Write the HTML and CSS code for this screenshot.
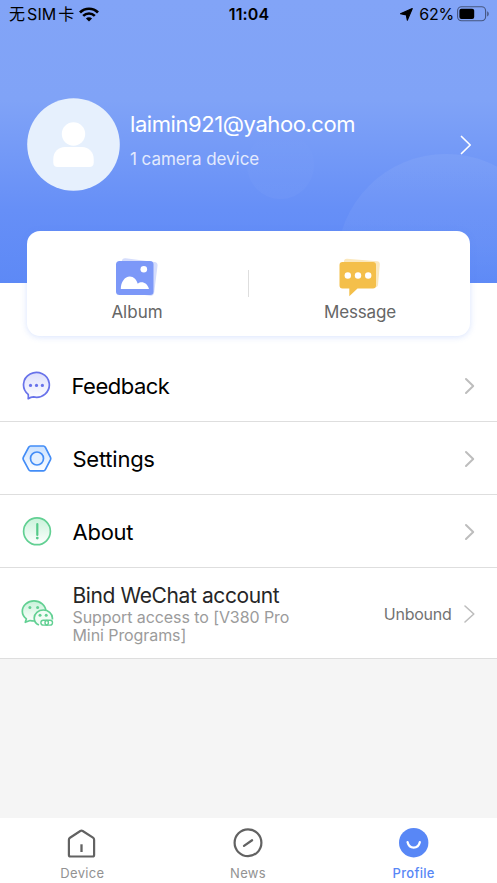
FILE: index.html
```html
<!DOCTYPE html>
<html lang="en">
<head>
<meta charset="utf-8">
<meta name="viewport" content="width=device-width, initial-scale=1">
<title>Profile</title>
<link rel="stylesheet" href="styles.css">
</head>
<body>
<div class="app">
  <header class="hero">
    <i class="bubble bubble-small"></i>
    <i class="bubble bubble-large"></i>
    <div class="status">
      <div class="status-left">
        <span class="carrier">无<span class="sim">SIM</span>卡</span>
        <svg class="wifi" width="20" height="15" viewBox="0 0 20 15"><path d="M1 5.5a12.7 12.7 0 0 1 18 0" fill="none" stroke="#000" stroke-width="2.7"/><path d="M4.2 8.9a8.2 8.2 0 0 1 11.6 0" fill="none" stroke="#000" stroke-width="2.6"/><path d="M10 14.5 6.9 11.5a4.4 4.4 0 0 1 6.2 0z"/></svg>
      </div>
      <time class="clock">11:04</time>
      <div class="status-right">
        <svg class="locate" width="13" height="13" viewBox="0 0 13 13"><path d="M12.3.6 7.3 12.2 6.300 6.900.5 5.8z" stroke="#000" stroke-width="1.100" stroke-linejoin="round"/></svg>
        <span class="percent">62%</span>
        <svg class="battery" width="33" height="16" viewBox="0 0 33 16"><rect x=".6" y=".8" width="28" height="14" rx="4" fill="none" stroke="#45557f" stroke-width="1.1"/><rect x="2.4" y="2.7" width="14.8" height="10.2" rx="2"/><path d="M30.2 5.2c2 .7 2 4.5 0 5.2z" fill="#45557f"/></svg>
      </div>
    </div>
    <div class="account">
      <svg class="avatar" width="93" height="93" viewBox="0 0 93 93"><circle cx="46.5" cy="46.5" r="46.3" fill="#e6f0fd"/><circle cx="46.5" cy="36" r="11.7" fill="#fff"/><path d="M38 49h17c7 0 11.700 5 11.700 12v3.500q0 4.500-4.500 4.500h-31.400q-4.500 0-4.500-4.500v-3.500c0-7 4.700-12 11.700-12z" fill="#fff"/></svg>
      <div class="identity">
        <div class="email">laimin921@yahoo.com</div>
        <div class="devices">1 camera device</div>
      </div>
      <svg class="go" width="12" height="20" viewBox="0 0 12 20"><path d="M1.500 1.500 10.200 10l-8.700 8.500" fill="none" stroke="#fff" stroke-width="1.700" stroke-linecap="round" stroke-linejoin="round"/></svg>
    </div>
  </header>

  <section class="shortcuts">
    <div class="shortcut">
      <svg width="44" height="40" viewBox="0 0 44 40"><rect x="5" y="2" width="36" height="34" rx="3.500" fill="#d5ddfc" transform="rotate(7 23 19)"/><rect x="1" y="3" width="37.500" height="34" rx="3.500" fill="#7c98f8"/><circle cx="28.800" cy="11.300" r="3.300" fill="#fff"/><path d="M5.800 31c0-7 4-12.500 9-12.500 4 0 6.500 3 8 7.200 3.500-2.800 9.200-1.500 11.200 5.300z" fill="#fff"/></svg>
      <span class="album-label">Album</span>
    </div>
    <i class="split"></i>
    <div class="shortcut">
      <svg class="message-icon" width="44" height="40" viewBox="0 0 44 40"><rect x="5" y="2" width="36" height="26" rx="3" fill="#fbe8bd" transform="rotate(5 23 15)"/><path d="M4.500 4h30.500q3 0 3 3v20.500q0 3-3 3h-15.500l-8.200 7.700v-7.700h-6.800q-3 0-3-3v-20.500q0-3 3-3z" fill="#f4bf4a"/><circle cx="9.800" cy="17.500" r="3.200" fill="#fff"/><circle cx="20" cy="17.500" r="3.200" fill="#fff"/><circle cx="30.200" cy="17.500" r="3.200" fill="#fff"/></svg>
      <span class="message-label">Message</span>
    </div>
  </section>

  <main class="menu">
    <div class="row row-first">
      <svg class="icon" width="32" height="32" viewBox="0 0 32 32"><defs><linearGradient id="violet" x2="0" y2="1"><stop stop-color="#dddffc"/><stop offset="1" stop-color="#fff"/></linearGradient></defs><path d="M7.200 24.400A12.900 12.400 0 1 1 12.400 26.900Q9.800 26.900 7.200 28.700 7.500 26.500 7.200 24.400z" fill="url(#violet)" stroke="#6872ea" stroke-width="1.700" stroke-linejoin="round"/><g fill="#6872ea"><circle cx="9.500" cy="15.400" r="1.600"/><circle cx="15.500" cy="15.400" r="1.600"/><circle cx="21.400" cy="15.400" r="1.600"/></g></svg>
      <span class="title feedback">Feedback</span>
      <svg class="next" width="12" height="18" viewBox="0 0 12 18"><path d="M2 2l7.200 7L2 16" fill="none" stroke="#bdbdbd" stroke-width="2" stroke-linecap="round" stroke-linejoin="round"/></svg>
    </div>
    <div class="row">
      <svg class="icon" width="32" height="32" viewBox="0 0 32 32"><defs><linearGradient id="blue" x2="0" y2="1"><stop stop-color="#cae1fe"/><stop offset="1" stop-color="#fff"/></linearGradient></defs><path d="M9.600 3H22.400Q23.600 3 24.300 4.200L29.500 14.300Q30 15.500 29.500 16.700L24.300 26.600Q23.600 27.900 22.400 27.900H9.600Q8.400 27.900 7.700 26.600L2.300 16.700Q1.800 15.500 2.300 14.300L7.700 4.200Q8.400 3 9.600 3z" fill="url(#blue)" stroke="#438df7" stroke-width="1.700"/><circle cx="16" cy="15.500" r="6.500" fill="#e4f0ff" stroke="#438df7" stroke-width="1.700"/></svg>
      <span class="title settings">Settings</span>
      <svg class="next" width="12" height="18" viewBox="0 0 12 18"><path d="M2 2l7.200 7L2 16" fill="none" stroke="#bdbdbd" stroke-width="2" stroke-linecap="round" stroke-linejoin="round"/></svg>
    </div>
    <div class="row">
      <svg class="icon" width="32" height="32" viewBox="0 0 32 32"><defs><linearGradient id="green" x2="0" y2="1"><stop stop-color="#c9f2da"/><stop offset="1" stop-color="#fff"/></linearGradient></defs><circle cx="16" cy="15.300" r="13.400" fill="url(#green)" stroke="#62d093" stroke-width="1.700"/><path d="M16.300 8v11" stroke="#55ca89" stroke-width="2.200" stroke-linecap="round"/><circle cx="16.300" cy="22.100" r="1.400" fill="#55ca89"/></svg>
      <span class="title about">About</span>
      <svg class="next" width="12" height="18" viewBox="0 0 12 18"><path d="M2 2l7.200 7L2 16" fill="none" stroke="#bdbdbd" stroke-width="2" stroke-linecap="round" stroke-linejoin="round"/></svg>
    </div>
    <div class="row row-wechat">
      <svg class="icon" width="33" height="32" viewBox="0 0 33 32"><g fill="url(#green)" stroke="#62d093" stroke-width="1.700" stroke-linejoin="round"><path d="M5.400 20.800C3 18.900 1.300 16.200 1.300 13.200 1.300 7.500 6.800 2.900 13 2.900S24.800 7.500 24.800 13.200 19.500 23 13 23Q11 23 9 22.500L4.300 24.300z"/><path d="M17.900 27C15 25.800 13.200 23 13.200 20 13.200 15.400 17.400 12 22.300 12S31.400 15.400 31.400 20V21.500" fill="#f2fcf6"/></g><g fill="#62d093"><circle cx="8.900" cy="9.600" r="1.500"/><circle cx="16.600" cy="9.600" r="1.500"/><circle cx="19" cy="17.300" r="1.500"/><circle cx="25.200" cy="17.300" r="1.500"/></g><rect x="19.900" y="22.200" width="7.500" height="4.900" rx="2.400" fill="#fff" stroke="#62d093" stroke-width="1.400"/><rect x="24" y="22.200" width="7.500" height="4.900" rx="2.400" fill="none" stroke="#62d093" stroke-width="1.400"/></svg>
      <div class="copy">
        <span class="bind">Bind WeChat account</span>
        <span class="hint">Support access to [V380 Pro<br>Mini Programs]</span>
      </div>
      <span class="state">Unbound</span>
      <svg class="next" width="13" height="20" viewBox="0 0 13 20"><path d="M2 2l8.800 8L2 18" fill="none" stroke="#bdbdbd" stroke-width="1.600" stroke-linecap="round" stroke-linejoin="round"/></svg>
    </div>
  </main>

  <nav class="tabs">
    <div class="tab">
      <svg class="house" width="32" height="32" viewBox="0 0 32 32"><path d="M2.900 12.700Q2.900 11.400 4 10.700L14.300 4Q15.500 3.300 16.700 4L27 10.700Q28.100 11.400 28.100 12.700V28Q28.100 29.500 26.600 29.500H4.400Q2.900 29.500 2.900 28z" fill="none" stroke="#626262" stroke-width="2.200"/><path d="M15.500 17.300v7.700" stroke="#626262" stroke-width="2.300"/></svg>
      <span class="device">Device</span>
    </div>
    <div class="tab">
      <svg width="32" height="32" viewBox="0 0 32 32"><circle cx="16" cy="15.700" r="13.400" fill="none" stroke="#626262" stroke-width="2.200"/><path d="m12 18.900 8.100-5.600" stroke="#626262" stroke-width="2.300" stroke-linecap="round"/></svg>
      <span class="news">News</span>
    </div>
    <div class="tab active">
      <svg width="32" height="32" viewBox="0 0 32 32"><circle cx="15.700" cy="15.700" r="14.700" fill="#5887f6"/><path d="M9.600 15.200c1.700 7.100 10.500 7.100 12.200 0" fill="none" stroke="#fff" stroke-width="2.300" stroke-linecap="round"/></svg>
      <span class="profile">Profile</span>
    </div>
  </nav>
</div>
</body>
</html>
```
FILE: styles.css
```css
* { box-sizing: border-box; }
body { margin: 0; background: #f5f5f5; font-family: Inter, "Noto Sans CJK SC", sans-serif; }
svg { display: block; flex: none; }
span, time, .email, .devices { white-space: nowrap; }

.app { display: flex; flex-direction: column; width: 497px; height: 883px; overflow: hidden; background: linear-gradient(#fff 360px, #f5f5f5 360px); }
.hero { position: relative; flex: none; height: 283px; overflow: hidden; background: linear-gradient(#82a4f7 0, #80a3f7 100px, #668ff7 210px, #5d89f6 283px); }
.bubble { position: absolute; border-radius: 50%; }
.bubble-small { left: 247px; top: 131px; width: 67px; height: 68px; background: linear-gradient(rgba(255,255,255,0), rgba(255,255,255,.03)); }
.bubble-large { left: 337px; top: 154px; width: 218px; height: 218px; background: linear-gradient(rgba(255,255,255,.06), rgba(255,255,255,.04) 40%, rgba(255,255,255,0) 65%); }

.status { position: relative; display: grid; grid-template-columns: 1fr auto 1fr; align-items: center; height: 28px; padding: 0 7px 0 9px; font-size: 16px; line-height: 28px; color: #000; }
.status-left, .status-right { display: flex; align-items: center; }
.status-left { gap: 6px; }
.carrier { letter-spacing: -.9px; }
.sim { margin: 0 2px 0 3px; letter-spacing: 0; }
.clock { font-weight: 600; letter-spacing: .1px; margin-right: 1px; }
.status-right { justify-content: flex-end; }
.locate { margin: 0 6px 0 0; }
.percent { letter-spacing: -.2px; margin-right: 3px; }

.account { position: relative; display: flex; align-items: center; height: 93px; margin: 70px 25px 0 26.500px; }
.identity { flex: 1; padding: 0 0 9px 10.500px; color: #fff; }
.email { font-size: 22px; line-height: 30px; letter-spacing: -.43px; }
.devices { margin-top: 8px; font-size: 17px; line-height: 24px; letter-spacing: -.05px; color: #e3eafd; }

.shortcuts { position: relative; display: grid; grid-template-columns: 221px 1px 221px; align-items: center; flex: none; width: 443.500px; height: 105px; margin: -52px 0 0 26.500px; border-radius: 13px; background: #fff; box-shadow: 0 1px 6px rgba(93,137,246,.24); }
.shortcut { display: flex; flex-direction: column; align-items: center; padding-top: 15px; color: #666; font-size: 17px; line-height: 24px; }
.shortcut span { margin-top: 2px; }
.message-icon { margin-left: 1px; }
.message-label { margin-left: 2px; letter-spacing: -.15px; }
.split { height: 27px; background: #dedede; }

.menu { flex: none; margin-top: 14px; background: #fff; }
.row { display: flex; align-items: center; height: 73px; padding: 1px 21px 0; border-bottom: 1px solid #dedede; }
.row-first { height: 72px; padding-top: 0; }
.row-wechat { height: 91px; }
.icon { margin-left: -.3px; }
.title { flex: 1; margin-left: 19.800px; font-size: 22px; line-height: 30px; color: #000; }
.feedback { margin-left: 18.800px; letter-spacing: -.5px; }
.settings, .about { letter-spacing: -.25px; }
.copy { flex: 1; display: flex; flex-direction: column; margin-left: 18.800px; padding-top: 1px; }
.bind { font-size: 21px; line-height: 24px; letter-spacing: -.4px; color: #262626; }
.hint { font-size: 16px; line-height: 18.500px; letter-spacing: -.08px; color: #9b9b9b; }
.state { margin-right: 11.500px; font-size: 16px; letter-spacing: -.25px; color: #737373; }

.tabs { display: grid; grid-template-columns: repeat(3, 1fr); flex: none; height: 65px; margin-top: auto; background: #fff; }
.tab { display: flex; flex-direction: column; align-items: center; padding-top: 9px; color: #929292; font-size: 13px; line-height: 18px; letter-spacing: .3px; }
.tab span { margin: 4.500px 1px 0 0; }
.house { margin-right: 2px; }
.active { color: #5887f6; font-weight: 500; }
```
